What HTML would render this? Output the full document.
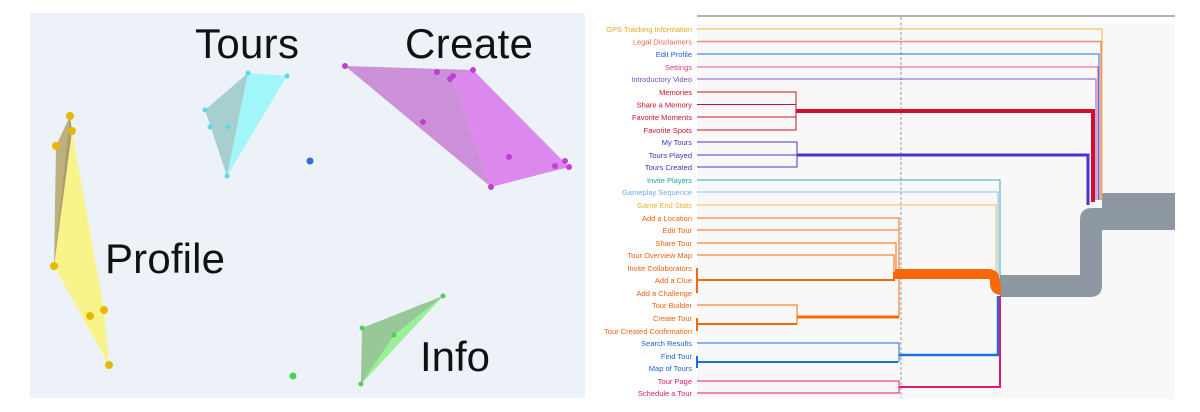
<!DOCTYPE html>
<html><head><meta charset="utf-8"><style>
html,body{margin:0;padding:0;background:#fff;width:1200px;height:412px;overflow:hidden}
svg{display:block}
.lb{font-family:"Liberation Sans",sans-serif;font-size:7.5px;text-anchor:end}
.big{font-family:"Liberation Sans",sans-serif;font-size:42px;fill:#111}
</style></head><body>
<svg width="1200" height="412" viewBox="0 0 1200 412">
<rect x="30" y="13" width="555" height="385" fill="#edf2f8"/>
<text class="big" x="195" y="58" textLength="104">Tours</text>
<text class="big" x="405" y="58" textLength="128">Create</text>
<text class="big" x="105" y="273" textLength="120">Profile</text>
<text class="big" x="420" y="371" textLength="70">Info</text>
<polygon points="70,116 56,146 54,266 72,131" fill="#b8a870" opacity="0.9"/>
<polygon points="72,131 54,266 109,365 104,310" fill="#f8f48a"/>
<polygon points="70,116 72,131 54,266" fill="#a8986a" opacity="0.8"/>
<g fill="#e8b800"><circle cx="70" cy="116" r="4"/><circle cx="72" cy="131" r="4"/><circle cx="56" cy="146" r="4"/><circle cx="54" cy="266" r="4"/><circle cx="90" cy="316" r="4"/><circle cx="104" cy="310" r="4"/><circle cx="109" cy="365" r="4"/></g>
<polygon points="248,73 205,110 227,176" fill="#a8cfd0"/>
<polygon points="248,73 287,76 227,176" fill="#a0f6f8"/>
<g fill="#58dde8"><circle cx="248" cy="73" r="2.5"/><circle cx="287" cy="76" r="2.5"/><circle cx="205" cy="110" r="2.5"/><circle cx="210" cy="127" r="2.5"/><circle cx="228" cy="127" r="2.5"/><circle cx="227" cy="176" r="2.5"/></g>
<circle cx="310" cy="161" r="3.5" fill="#3070d0"/>
<polygon points="345,66 473,70 452,78 491,187" fill="#cc90d8"/>
<polygon points="452,78 473,70 569,167 491,187" fill="#dd88ec"/>
<g fill="#c040d0"><circle cx="345" cy="66" r="3"/><circle cx="437" cy="72" r="3"/><circle cx="473" cy="70" r="3"/><circle cx="450" cy="79" r="3"/><circle cx="453" cy="76" r="3"/><circle cx="423" cy="122" r="3"/><circle cx="509" cy="157" r="3"/><circle cx="555" cy="166" r="3"/><circle cx="565" cy="161" r="3"/><circle cx="569" cy="167" r="3"/><circle cx="491" cy="187" r="3"/></g>
<polygon points="443,296 362,328 361,384" fill="#98c898"/>
<polygon points="443,296 394,335 361,384" fill="#98f098"/>
<g fill="#50d050"><circle cx="443" cy="296" r="2.5"/><circle cx="362" cy="328" r="2.5"/><circle cx="394" cy="335" r="2.5"/><circle cx="361" cy="384" r="2.5"/><circle cx="293" cy="376" r="3.5"/></g>

<line x1="697" y1="16" x2="1175" y2="16" stroke="#999" stroke-width="1.5"/>
<rect x="697" y="24" width="478" height="375" fill="#f8f8f8"/>
<line x1="901" y1="17" x2="901" y2="398" stroke="#999" stroke-width="1" stroke-dasharray="3,2"/>
<path d="M1175 193 V230 H1102 V285 Q1102 297 1090 297 H1000 V275 H1080 V220 Q1080 208 1092 208 H1102 V193 Z" fill="#8e98a3"/>

<g fill="none">
<path d="M697 29 H1102 V200" stroke="#f5b830" stroke-width="1"/>
<path d="M697 41.5 H1101 V200" stroke="#f0907a" stroke-width="1.5"/>
<path d="M697 54 H1099 V200" stroke="#1a73e8" stroke-width="1"/>
<path d="M697 67 H1098 V200" stroke="#e8508a" stroke-width="1"/>
<path d="M697 79 H1096 V200" stroke="#8b52d8" stroke-width="1"/>
<path d="M697 92 H796 V130 H697 M697 104.5 H796 M697 117 H796" stroke="#d0102a" stroke-width="1"/>
<path d="M796 111 H1093 V202" stroke="#d0102a" stroke-width="4"/>
<path d="M697 142 H797 V167 H697 M697 155 H797" stroke="#5030d0" stroke-width="1"/>
<path d="M797 155 H1088 V205" stroke="#5030d0" stroke-width="3"/>
<path d="M697 180 H1000 V276" stroke="#30b0b8" stroke-width="1"/>
<path d="M697 192 H998 V276" stroke="#88c0f8" stroke-width="1"/>
<path d="M697 205 H996 V276" stroke="#f5c050" stroke-width="1"/>
<g stroke="#f86808" stroke-width="1">
<path d="M697 218 H899 V317 M697 230 H898 M697 243 H896 V273 M697 255 H894 V273"/>
<path d="M697 305 H797 V324"/>
<path d="M697 268 V293" stroke-width="2"/>
<path d="M697 318 V331" stroke-width="2"/>
</g>
<path d="M697 280 H894 V272" stroke="#f86808" stroke-width="2"/>
<path d="M697 324 H797" stroke="#f86808" stroke-width="2"/>
<path d="M797 317 H899" stroke="#f86808" stroke-width="3"/>
<path d="M895 274 H988 Q995 274 995 281 V283 Q995 290 1001 290" stroke="#f86808" stroke-width="10"/>
<path d="M697 343 H899 V362" stroke="#1a6ee0" stroke-width="1"/>
<path d="M697 356 V368" stroke="#1a6ee0" stroke-width="2"/>
<path d="M697 362 H898" stroke="#1a6ee0" stroke-width="2"/>
<path d="M899 355 H998 V296" stroke="#1a6ee0" stroke-width="2.5"/>
<path d="M697 381 H899 V393 H697" stroke="#e81870" stroke-width="1"/>
<path d="M899 387 H1000 V296" stroke="#e81870" stroke-width="2"/>
</g>

<g class="lb">
<text x="692" y="32" fill="#e8a820">GPS Tracking Information</text>
<text x="692" y="44.5" fill="#e86848">Legal Disclaimers</text>
<text x="692" y="57" fill="#1a60d8">Edit Profile</text>
<text x="692" y="70" fill="#e03878">Settings</text>
<text x="692" y="82" fill="#7a48c8">Introductory Video</text>
<text x="692" y="95" fill="#c81028">Memories</text>
<text x="692" y="107.5" fill="#c81028">Share a Memory</text>
<text x="692" y="120" fill="#c81028">Favorite Moments</text>
<text x="692" y="133" fill="#c81028">Favorite Spots</text>
<text x="692" y="145" fill="#4a2cc0">My Tours</text>
<text x="692" y="158" fill="#4a2cc0">Tours Played</text>
<text x="692" y="170" fill="#4a2cc0">Tours Created</text>
<text x="692" y="183" fill="#20a0a8">Invite Players</text>
<text x="692" y="195" fill="#70aaf0">Gameplay Sequence</text>
<text x="692" y="208" fill="#e8b030">Game End Stats</text>
<text x="692" y="221" fill="#f06010">Add a Location</text>
<text x="692" y="233" fill="#f06010">Edit Tour</text>
<text x="692" y="246" fill="#f06010">Share Tour</text>
<text x="692" y="258" fill="#f06010">Tour Overview Map</text>
<text x="692" y="271" fill="#f06010">Invite Collaborators</text>
<text x="692" y="283" fill="#f06010">Add a Clue</text>
<text x="692" y="296" fill="#f06010">Add a Challenge</text>
<text x="692" y="308" fill="#f06010">Tour Builder</text>
<text x="692" y="321" fill="#f06010">Create Tour</text>
<text x="692" y="334" fill="#f06010">Tour Created Confirmation</text>
<text x="692" y="346" fill="#1a60d8">Search Results</text>
<text x="692" y="359" fill="#1a60d8">Find Tour</text>
<text x="692" y="371" fill="#1a60d8">Map of Tours</text>
<text x="692" y="384" fill="#e01868">Tour Page</text>
<text x="692" y="396" fill="#e01868">Schedule a Tour</text>
</g>
</svg>
</body></html>
